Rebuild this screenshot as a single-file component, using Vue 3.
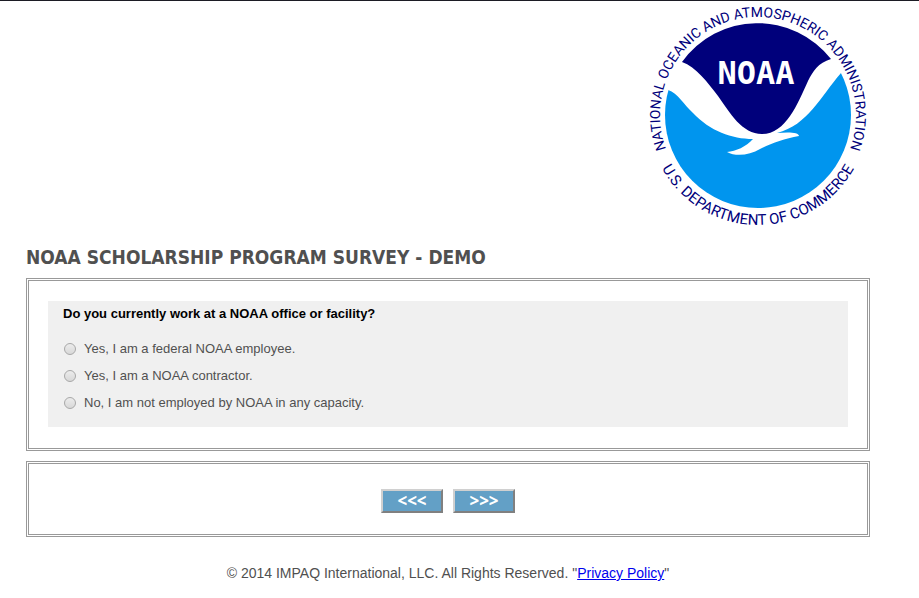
<template>
  <div class="survey-page">
    <header class="survey-header">
      <svg class="logo" viewBox="0 0 222 228" role="img" aria-label="NOAA">
        <defs>
          <path id="ring-top" d="M 110 212 A 98 98 0 0 1 110 16 A 98 98 0 0 1 110 212" />
          <path id="ring-bottom" d="M 0 114 A 110 110 0 0 0 220 114" />
        </defs>
        <circle cx="110" cy="114" r="93" fill="#0095ee" />
        <path
          fill="#fff"
          d="M8 84 L20 89 C30 92 36 104 45 112 C62 130 84 138 105 138 C98 146 88 150 79 151 C88 156 102 154 112 148 C124 142 136 138 151 135 C151 131 140 131 129 132 C160 124 172 96 193 72 L204 50 L190 10 L110 8 L20 20 Z"
        />
        <path
          fill="#00007b"
          d="M34 61 A93 93 0 0 1 183 58 C170 62 165 70 160 80 C150 102 138 133 114 133 C94 133 82 112 70 95 C60 82 48 66 34 61 Z"
        />
        <text class="logo-name" x="108" y="83" text-anchor="middle">NOAA</text>
        <text class="logo-ring" text-anchor="middle">
          <textPath href="#ring-top" startOffset="50%">NATIONAL OCEANIC AND ATMOSPHERIC ADMINISTRATION</textPath>
        </text>
        <text class="logo-ring logo-ring-bottom" text-anchor="middle">
          <textPath href="#ring-bottom" startOffset="50%">U.S. DEPARTMENT OF COMMERCE</textPath>
        </text>
      </svg>
    </header>

    <h1>NOAA SCHOLARSHIP PROGRAM SURVEY - DEMO</h1>

    <form @submit.prevent>
      <div class="panel">
        <fieldset class="question">
          <legend>Do you currently work at a NOAA office or facility?</legend>
          <label v-for="option in options" :key="option.value" class="option">
            <input type="radio" name="employment" :value="option.value" v-model="answer" />
            <span>{{ option.label }}</span>
          </label>
        </fieldset>
      </div>

      <div class="panel nav">
        <button type="button" class="nav-btn" aria-label="Previous">&lt;&lt;&lt;</button>
        <button type="submit" class="nav-btn" aria-label="Next">&gt;&gt;&gt;</button>
      </div>
    </form>

    <footer>
      © 2014 IMPAQ International, LLC. All Rights Reserved. "<a href="#">Privacy Policy</a>"
    </footer>
  </div>
</template>

<script setup>
import { ref } from 'vue'

const answer = ref('')

const options = [
  { value: 'federal', label: 'Yes, I am a federal NOAA employee.' },
  { value: 'contractor', label: 'Yes, I am a NOAA contractor.' },
  { value: 'none', label: 'No, I am not employed by NOAA in any capacity.' }
]
</script>

<style>
body {
  margin: 0;
  background: #fff;
}
</style>

<style scoped>
.survey-page {
  border-top: 1px solid #1c1c24;
  padding: 0 49px 16px 26px;
  font-family: "Liberation Sans", Arial, sans-serif;
  font-size: 13px;
  color: #505050;
}

.survey-header {
  display: flex;
  justify-content: flex-end;
}

.logo {
  display: block;
  width: 222px;
  height: 228px;
}

.logo-name {
  font-family: "DejaVu Sans Mono", monospace;
  font-size: 32px;
  font-weight: bold;
  fill: #fff;
}

.logo-ring {
  font-family: Roboto, "Liberation Sans", sans-serif;
  font-size: 14px;
  fill: #00007b;
}

.logo-ring-bottom {
  font-size: 15px;
}

h1 {
  margin: 16px 0 9px;
  font-family: Tahoma, "DejaVu Sans Condensed", "Noto Sans", sans-serif;
  font-size: 19px;
  line-height: 24px;
  font-weight: bold;
}

.panel {
  border: 3px double #999;
  padding: 20px 19px 21px;
  margin-bottom: 10px;
}

.question {
  margin: 0;
  border: 0;
  padding: 4px 15px 11px;
  min-width: 0;
  background: #f0f0f0;
}

.question legend {
  float: left;
  width: 100%;
  padding: 0;
  margin-bottom: 13px;
  line-height: 17px;
  font-weight: bold;
  color: #000;
}

.option {
  clear: both;
  display: flex;
  align-items: center;
  gap: 8px;
  height: 27px;
}

.option input {
  appearance: none;
  box-sizing: border-box;
  width: 12px;
  height: 12px;
  margin: 0 0 0 1px;
  border: 1px solid #a8a8a8;
  border-radius: 50%;
  background: linear-gradient(#ececec, #d8d8d8);
}

.option input:checked {
  background: radial-gradient(#444 0 3px, #e4e4e4 4px);
}

.nav {
  display: flex;
  justify-content: center;
  gap: 10px;
  padding: 25px 19px 21px;
}

.nav-btn {
  box-sizing: border-box;
  width: 62px;
  height: 24px;
  padding: 0;
  border: 2px solid;
  border-color: #d0d0d0 #808080 #808080 #d0d0d0;
  background: #63a0c6;
  color: #fff;
  font-family: Tahoma, "Noto Sans", sans-serif;
  font-size: 17px;
  line-height: 18px;
  font-weight: bold;
}

footer {
  margin-top: 28px;
  font-size: 14px;
  line-height: 16px;
  text-align: center;
}

footer a {
  color: #0000ee;
}
</style>
